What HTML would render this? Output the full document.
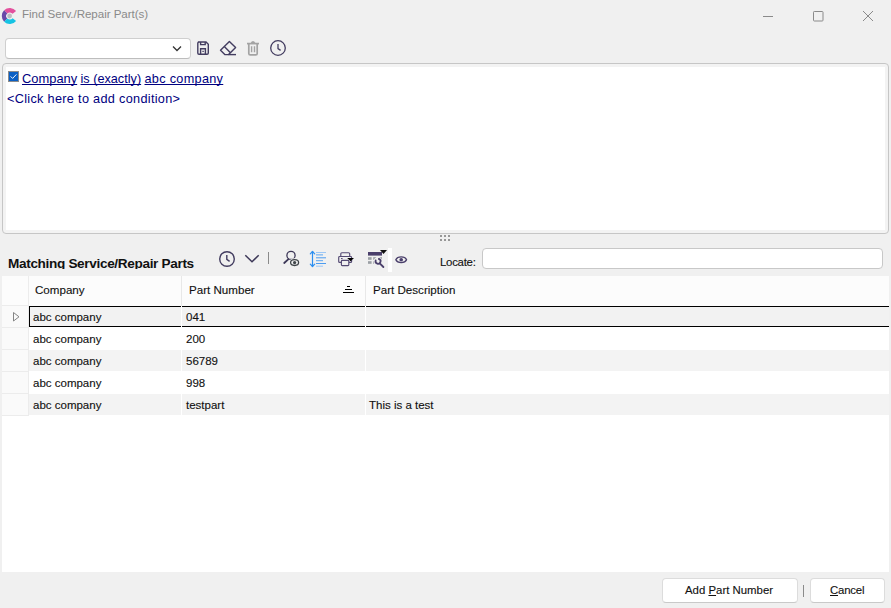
<!DOCTYPE html>
<html><head><meta charset="utf-8">
<style>
*{box-sizing:border-box;margin:0;padding:0}
html,body{width:891px;height:608px;overflow:hidden;background:#f0f0f0;font-family:"Liberation Sans",sans-serif;position:relative}
.a{position:absolute}
.t{position:absolute;white-space:pre;line-height:1}
u{text-decoration-skip-ink:none}
.k{-webkit-text-stroke:0.12px #111}
svg{position:absolute;overflow:visible}
</style></head><body>

<!-- title bar -->
<svg style="left:0;top:0" width="30" height="30" viewBox="0 0 30 30">
  <path d="M4.14 10.34 A8 8 0 0 1 16.10 11.07 L12.64 13.78 A3.6 3.6 0 0 0 7.25 13.45 Z" fill="#e3509d"/>
  <path d="M4.14 21.66 A8 8 0 0 1 4.14 10.34 L7.25 13.45 A3.6 3.6 0 0 0 7.25 18.55 Z" fill="#6949a8"/>
  <path d="M16.10 20.93 A8 8 0 0 1 4.14 21.66 L7.25 18.55 A3.6 3.6 0 0 0 12.64 18.22 Z" fill="#16c3e3"/>
  <circle cx="9.6" cy="16" r="2.4" fill="#bdbdc1"/>
</svg>
<div class="t" style="left:22px;top:8.4px;font-size:11.6px;color:#8a8a8a;letter-spacing:-0.05px">Find Serv./Repair Part(s)</div>
<svg style="left:0;top:0" width="891" height="30">
  <line x1="763" y1="16.5" x2="773" y2="16.5" stroke="#8a8a8a" stroke-width="1"/>
  <rect x="813.5" y="11.5" width="9.5" height="9.5" rx="0.8" stroke="#8a8a8a" stroke-width="1" fill="none"/>
  <path d="M863 11 L873 21 M873 11 L863 21" stroke="#8a8a8a" stroke-width="1"/>
</svg>

<!-- toolbar 1 -->
<div class="a" style="left:5px;top:38px;width:186px;height:21px;background:#fff;border:1px solid #cfcfcf;border-bottom-color:#bdbdbd;border-radius:4px"></div>
<svg style="left:0;top:0" width="300" height="62">
  <path d="M173 46.5 L177 50.5 L181 46.5" stroke="#333" stroke-width="1.3" fill="none"/>
  <!-- save -->
  <g stroke="#433d60" stroke-width="1.4" fill="none">
    <path d="M198 42 H206 L208.3 44.3 V53 Q208.3 54.2 207 54.2 H199 Q197.8 54.2 197.8 53 V43.2 Q197.8 42 199 42 Z"/>
    <path d="M200.6 42 V44.6 H205.2 V42"/>
    <path d="M200.6 54 V48.8 H205.4 V54"/>
  </g>
  <rect x="202.3" y="50.8" width="1.6" height="1.1" fill="#433d60"/>
  <!-- eraser -->
  <g stroke="#433d60" stroke-width="1.4" fill="none" stroke-linejoin="round">
    <path d="M220.5 50.3 L229.4 41.4 L235.6 47.6 L228.6 54.6 H224.8 Z"/>
    <path d="M224.3 46.6 L230.2 52.5"/>
    <path d="M228.6 54.6 H236"/>
  </g>
  <!-- trash -->
  <g stroke="#a3a3a3" stroke-width="1.7" fill="none">
    <path d="M247 43.6 H259"/>
    <path d="M250.6 43.6 Q251 41 253 41 Q255 41 255.4 43.6 Z" fill="#a3a3a3" stroke="none"/>
    <path d="M248.8 43.6 V53.4 Q248.8 54.8 250.2 54.8 H255.8 Q257.2 54.8 257.2 53.4 V43.6"/>
    <path d="M251.6 46.2 V52.2 M254.5 46.2 V52.2" stroke-width="1.4"/>
  </g>
  <!-- clock -->
  <g stroke="#433d60" stroke-width="1.3" fill="none">
    <circle cx="278" cy="48" r="7.3"/>
    <path d="M278 44 V48.6 L280.6 50.4"/>
  </g>
</svg>

<!-- condition panel -->
<div class="a" style="left:2px;top:63px;width:887px;height:171px;background:#f3f3f3;border:1px solid #c6c6c6;border-radius:4px"></div>
<div class="a" style="left:6px;top:67px;width:879px;height:163px;background:#fff"></div>
<div class="a" style="left:8px;top:71px;width:11px;height:11px;background:#0a5fc4;border:1px solid #8c8c8c"></div>
<svg style="left:0;top:0" width="30" height="90">
  <path d="M10.6 76.4 L12.6 78.4 L16.4 74.4" stroke="#fff" stroke-width="0.95" fill="none"/>
</svg>
<div class="t" style="left:22px;top:73px;font-size:12.9px;color:#000080"><u>Company</u></div>
<div class="t" style="left:80.5px;top:73px;font-size:12.7px;color:#000080"><u>is (exactly)</u></div>
<div class="t" style="left:144.5px;top:73px;font-size:12.7px;color:#000080;letter-spacing:0.3px"><u>abc company</u></div>
<div class="t" style="left:7px;top:93px;font-size:12.7px;color:#000080;letter-spacing:0.31px">&lt;Click here to add condition&gt;</div>

<!-- grip -->
<svg style="left:0;top:0" width="891" height="245">
  <g fill="#979797">
    <rect x="440" y="235" width="2" height="2"/><rect x="444" y="235" width="2" height="2"/><rect x="448" y="235" width="2" height="2"/>
    <rect x="440" y="239" width="2" height="2"/><rect x="444" y="239" width="2" height="2"/><rect x="448" y="239" width="2" height="2"/>
  </g>
</svg>

<!-- toolbar 2 -->
<div class="a" style="left:0;top:250px;width:200px;height:19px;overflow:hidden">
  <div class="t" style="left:8px;top:6.5px;font-size:13.6px;font-weight:700;color:#111;letter-spacing:-0.34px">Matching Service/Repair Parts</div>
</div>


<svg style="left:0;top:0" width="420" height="280">
  <!-- clock -->
  <g stroke="#433d60" stroke-width="1.4" fill="none">
    <circle cx="227" cy="259" r="7.3"/>
    <path d="M226.8 255 V259.4 L229.6 261.4"/>
  </g>
  <!-- chevron -->
  <path d="M245.3 255.2 L252 261.8 L258.7 255.2" stroke="#3d3858" stroke-width="1.5" fill="none"/>
  <line x1="268.5" y1="252" x2="268.5" y2="264" stroke="#8a8a8a" stroke-width="1"/>
  <!-- search eye -->
  <g fill="none">
    <circle cx="291" cy="255.4" r="4.1" stroke="#3d3858" stroke-width="1.3"/>
    <path d="M284.2 263 L288.2 259.3" stroke="#3d3858" stroke-width="1.8" stroke-linecap="round"/>
    <ellipse cx="294.6" cy="262.6" rx="5.6" ry="4.4" fill="#f0f0f0" stroke="none"/>
    <ellipse cx="294.6" cy="262.6" rx="4" ry="2.9" stroke="#3e4448" stroke-width="1.3"/>
    <circle cx="294.6" cy="262.6" r="1.6" fill="#3e4448"/>
  </g>
  <!-- line spacing -->
  <g stroke="#2b8ef0" stroke-width="1.2" fill="none" stroke-linecap="round" stroke-linejoin="round">
    <path d="M312.5 251.5 V266.5"/>
    <path d="M310.3 253.8 L312.5 251.5 L314.7 253.8"/>
    <path d="M310.3 264.2 L312.5 266.5 L314.7 264.2"/>
  </g>
  <g stroke-width="1">
    <path d="M316 252.5 H326" stroke="#9cc7f6"/>
    <path d="M316 254.9 H323" stroke="#5aa5f2"/>
    <path d="M316 257.8 H326" stroke="#4c9cf0"/>
    <path d="M316 260.7 H323" stroke="#5aa5f2"/>
    <path d="M316 263.5 H326" stroke="#4c9cf0"/>
    <path d="M316 266.2 H323" stroke="#9cc7f6"/>
  </g>
  <!-- printer -->
  <g stroke="#544a73" stroke-width="1.15" fill="none" stroke-linejoin="round">
    <path d="M340.8 256.3 V253.8 Q340.8 252.7 341.9 252.7 H348.6 Q349.7 252.7 349.7 253.8 V256.3"/>
    <path d="M341.2 262.4 H339.7 Q338.7 262.4 338.7 261.4 V257.4 Q338.7 256.5 339.7 256.5 H350.6 Q351.6 256.5 351.6 257.4 V261.4 Q351.6 262.4 350.6 262.4 H349"/>
    <rect x="341.4" y="260.4" width="7.4" height="5.2" rx="0.8"/>
  </g>
  <path d="M341 258.6 H342.6" stroke="#4a3f6b" stroke-width="1"/>
  <path d="M347.2 258 H354 L350.6 261.2 Z" fill="#000"/>
  <!-- table wrench -->
  <rect x="368" y="252" width="14" height="3.6" fill="#4a3f6b"/>
  <g fill="#9a9fa4">
    <rect x="368" y="257.2" width="3.6" height="2.6"/>
    <rect x="373.2" y="257.2" width="3" height="2.6"/>
    <rect x="378" y="257.2" width="4" height="2.6"/>
    <rect x="368" y="261.2" width="3.6" height="2.6"/>
    <rect x="373.2" y="261.2" width="1" height="2.6"/>
  </g>
  <g fill="none" stroke-linecap="round">
    <circle cx="378" cy="261.4" r="3.6" stroke="#f0f0f0" stroke-width="1.6"/>
    <path d="M378.9 258.9 A2.5 2.5 0 1 1 375.7 260.5" stroke="#4a3f6b" stroke-width="1.8"/>
    <path d="M380 263.6 L383.4 267" stroke="#4a3f6b" stroke-width="1.8"/>
  </g>
  <path d="M380 250 H387 L383.5 254 Z" fill="#111"/>
  <rect x="388" y="248" width="4" height="24" fill="#fff"/>
  <!-- eye -->
  <g fill="none" stroke="#4a3f6b">
    <path d="M395.8 259.8 C397.6 256 404.8 256 406.6 259.8 C404.8 263.6 397.6 263.6 395.8 259.8 Z" stroke-width="1.3"/>
    <circle cx="401.2" cy="259.8" r="1.8" fill="#4a3f6b" stroke="none"/>
  </g>
</svg>

<div class="t k" style="left:440px;top:257px;font-size:11.4px;color:#111;letter-spacing:-0.25px">Locate:</div>
<div class="a" style="left:482px;top:248px;width:401px;height:21px;background:#fff;border:1px solid #c8c8c8;border-radius:4px"></div>

<!-- grid -->
<div class="a" style="left:2px;top:276px;width:887px;height:296px;background:#fff"></div>
<div class="a" style="left:2px;top:276px;width:887px;height:30px;background:#fcfcfc"></div>

<div class="t k" style="left:35px;top:284px;font-size:11.6px;color:#111">Company</div>
<div class="t k" style="left:189px;top:284px;font-size:11.6px;color:#111">Part Number</div>
<div class="t k" style="left:373px;top:284px;font-size:11.6px;color:#111">Part Description</div>


<!-- grid rows -->
<div class="a" style="left:2px;top:306px;width:26px;height:109px;background:#fafafa"></div>
<div class="a" style="left:29px;top:350px;width:860px;height:21px;background:#f3f3f3"></div>
<div class="a" style="left:29px;top:394px;width:860px;height:21px;background:#f3f3f3"></div>
<div class="a" style="left:29px;top:306px;width:860px;height:21px;background:#f2f2f2;border-top:1px solid #000;border-bottom:1px solid #000;border-left:1px solid #000"></div>
<!-- indicator col lines -->
<div class="a" style="left:2px;top:305px;width:26px;height:1px;background:#ececec"></div>
<div class="a" style="left:2px;top:327px;width:26px;height:1px;background:#ececec"></div>
<div class="a" style="left:2px;top:349px;width:26px;height:1px;background:#ececec"></div>
<div class="a" style="left:2px;top:371px;width:26px;height:1px;background:#ececec"></div>
<div class="a" style="left:2px;top:393px;width:26px;height:1px;background:#ececec"></div>
<div class="a" style="left:2px;top:415px;width:26px;height:1px;background:#ececec"></div>
<!-- column dividers -->
<div class="a" style="left:28px;top:276px;width:1px;height:140px;background:#ececec"></div>
<div class="a" style="left:181px;top:276px;width:1px;height:30px;background:#e8e8e8"></div><div class="a" style="left:181px;top:306px;width:1px;height:110px;background:#fff"></div>
<div class="a" style="left:365px;top:276px;width:1px;height:30px;background:#e8e8e8"></div><div class="a" style="left:365px;top:306px;width:1px;height:110px;background:#fff"></div>
<svg style="left:0;top:0" width="20" height="330">
  <path d="M13.5 312.5 L19 316.8 L13.5 321 Z" stroke="#858585" stroke-width="1" fill="none" stroke-linejoin="round"/>
</svg>
<svg style="left:0;top:0" width="360" height="300">
  <path d="M347 286.5 H350 M345 289.5 H352 M343 292.5 H354" stroke="#000" stroke-width="1"/>
</svg>
<div class="t k" style="left:33px;top:312px;font-size:11.5px;color:#111">abc company</div>
<div class="t k" style="left:33px;top:334px;font-size:11.5px;color:#111">abc company</div>
<div class="t k" style="left:33px;top:356px;font-size:11.5px;color:#111">abc company</div>
<div class="t k" style="left:33px;top:378px;font-size:11.5px;color:#111">abc company</div>
<div class="t k" style="left:33px;top:400px;font-size:11.5px;color:#111">abc company</div>
<div class="t k" style="left:186px;top:312px;font-size:11.5px;color:#111">041</div>
<div class="t k" style="left:186px;top:334px;font-size:11.5px;color:#111">200</div>
<div class="t k" style="left:186px;top:356px;font-size:11.5px;color:#111">56789</div>
<div class="t k" style="left:186px;top:378px;font-size:11.5px;color:#111">998</div>
<div class="t k" style="left:186px;top:400px;font-size:11.5px;color:#111">testpart</div>
<div class="t k" style="left:369px;top:400px;font-size:11.5px;color:#111">This is a test</div>

<!-- buttons -->
<div class="a" style="left:662px;top:578px;width:136px;height:25px;background:#fff;border:1px solid #dcdcdc;border-bottom-color:#c9c9c9;border-radius:4px"></div>
<div class="t k" style="left:685px;top:585px;font-size:11.4px;color:#111">Add <u>P</u>art Number</div>
<div class="a" style="left:803px;top:585px;width:1px;height:12px;background:#8a8a8a"></div>
<div class="a" style="left:810px;top:578px;width:75px;height:25px;background:#fff;border:1px solid #dcdcdc;border-bottom-color:#c9c9c9;border-radius:4px"></div>
<div class="t k" style="left:830px;top:585px;font-size:11.4px;color:#111;letter-spacing:-0.2px"><u>C</u>ancel</div>

</body></html>
